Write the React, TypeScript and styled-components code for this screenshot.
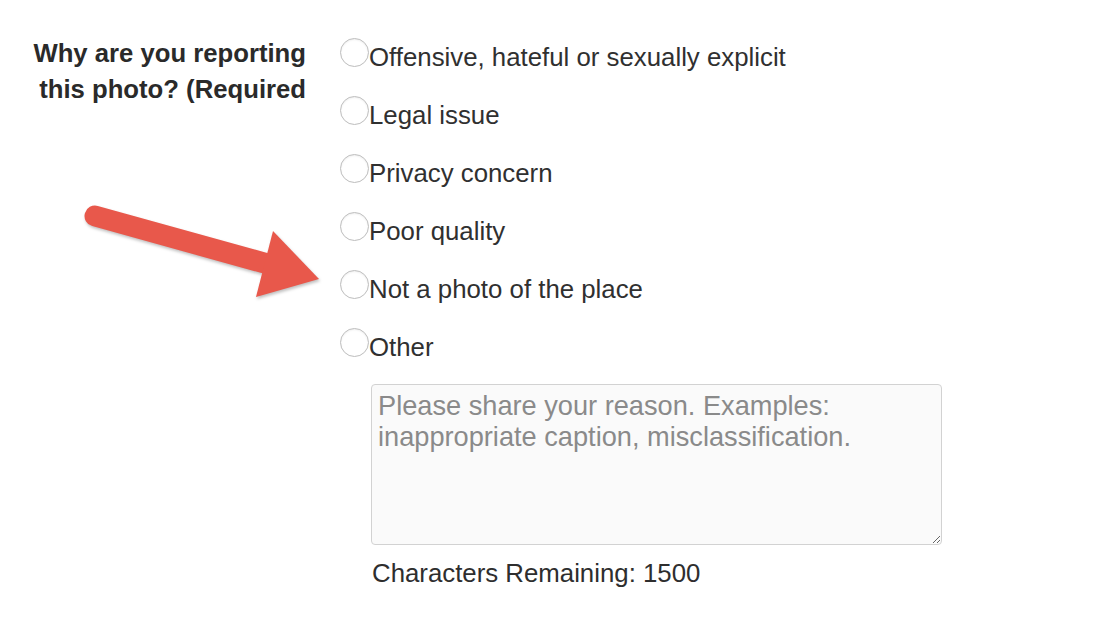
import React from "react";
import styled, { createGlobalStyle } from "styled-components";

const Global = createGlobalStyle`
  html, body { margin: 0; padding: 0; background: #ffffff; }
  body { font-family: "Liberation Sans", Arial, Helvetica, sans-serif; }
  * { box-sizing: border-box; }
`;

const Page = styled.div`
  position: relative;
  width: 1120px;
  height: 636px;
  background: #ffffff;
  overflow: hidden;
`;

const Form = styled.div`
  display: grid;
  grid-template-columns: 306px 1fr;
  column-gap: 34px;
  padding-top: 35px;
`;

const Question = styled.div`
  text-align: right;
  font-weight: 700;
  font-size: 25.7px;
  line-height: 36px;
  color: #2a2a2a;
`;

const Options = styled.div`
  display: flex;
  flex-direction: column;
  gap: 29px;
  margin-top: 3px;
`;

const OptionRow = styled.label`
  display: flex;
  align-items: flex-start;
  height: 29px;
  cursor: pointer;
`;

const Radio = styled.input.attrs({ type: "radio" })`
  appearance: none;
  -webkit-appearance: none;
  margin: 0;
  flex: none;
  width: 29px;
  height: 29px;
  border-radius: 50%;
  border: 1.8px solid #bdbdbd;
  background: #ffffff;
  box-shadow: inset 0 1px 2px rgba(0, 0, 0, 0.07);
`;

const OptionText = styled.span`
  font-size: 25.8px;
  line-height: 30px;
  padding-top: 4px;
  color: #303030;
  white-space: nowrap;
`;

const Reason = styled.textarea`
  display: block;
  margin: 27px 0 0 31px;
  width: 571px;
  height: 161px;
  padding: 5px 6px;
  border: 1.6px solid #d2d2d2;
  border-radius: 4px;
  background: #fafafa;
  font-family: "Liberation Sans", Arial, Helvetica, sans-serif;
  font-size: 27.2px;
  line-height: 31px;
  color: #333;
  resize: both;
  &::placeholder {
    color: #8a8a8a;
  }
`;

const Counter = styled.div`
  margin: 13px 0 0 32px;
  font-size: 25.8px;
  line-height: 30px;
  color: #2e2e2e;
`;

const ArrowSvg = styled.svg`
  position: absolute;
  left: 0;
  top: 0;
  pointer-events: none;
  filter: drop-shadow(1px 2px 1.5px rgba(0, 0, 0, 0.25));
`;

const options = [
  "Offensive, hateful or sexually explicit",
  "Legal issue",
  "Privacy concern",
  "Poor quality",
  "Not a photo of the place",
  "Other",
];

export default function App() {
  return (
    <Page>
      <Global />
      <Form>
        <Question>
          Why are you reporting
          <br />
          this photo? (Required
        </Question>
        <div>
          <Options>
            {options.map((o) => (
              <OptionRow key={o}>
                <Radio name="reason" />
                <OptionText>{o}</OptionText>
              </OptionRow>
            ))}
          </Options>
          <Reason placeholder="Please share your reason. Examples: inappropriate caption, misclassification." />
          <Counter>Characters Remaining: 1500</Counter>
        </div>
      </Form>
      <ArrowSvg width="1120" height="636" viewBox="0 0 1120 636">
        <line
          x1="95"
          y1="216"
          x2="268"
          y2="264"
          stroke="#e8584b"
          strokeWidth="21"
          strokeLinecap="round"
        />
        <polygon points="273,231 319,279 256,297" fill="#e8584b" />
      </ArrowSvg>
    </Page>
  );
}
